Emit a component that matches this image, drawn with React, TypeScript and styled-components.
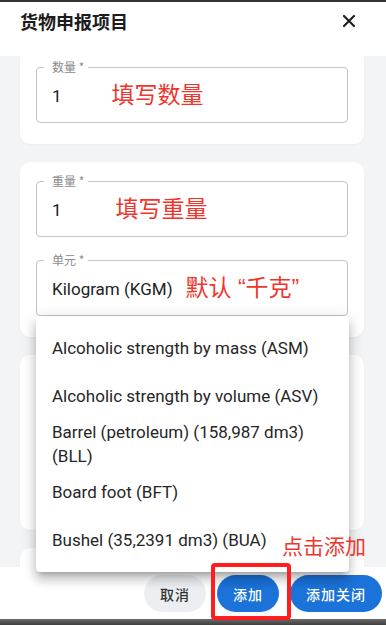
import React from 'react';
import styled, { createGlobalStyle } from 'styled-components';

const GlobalStyle = createGlobalStyle`
  html, body {
    margin: 0;
    padding: 0;
    background: #ffffff;
  }
  body {
    font-family: Roboto, "Noto Sans CJK SC", "Noto Sans", sans-serif;
    color: #222222;
  }
  * {
    box-sizing: border-box;
  }
`;

const units = [
  'Alcoholic strength by mass (ASM)',
  'Alcoholic strength by volume (ASV)',
  'Barrel (petroleum) (158,987 dm3) (BLL)',
  'Board foot (BFT)',
  'Bushel (35,2391 dm3) (BUA)',
];

/** 货物申报项目 弹窗 */
const App: React.FC = () => {
  return (
    <Screen>
      <GlobalStyle />
      <TopEdge />
      <Header>
        <Title>货物申报项目</Title>
        <CloseButton aria-label="关闭">
          <svg width="14" height="14" viewBox="0 0 14 14">
            <path
              d="M2 2 L12 12 M12 2 L2 12"
              stroke="#1f1f1f"
              strokeWidth="2.2"
              strokeLinecap="round"
            />
          </svg>
        </CloseButton>
      </Header>

      <Body>
        <Card $first>
          <Field>
            <Legend>数量 *</Legend>
            <ValueRow>
              <Value>1</Value>
              <Note $gap={50}>填写数量</Note>
            </ValueRow>
          </Field>
        </Card>

        <Card>
          <Field>
            <Legend>重量 *</Legend>
            <ValueRow>
              <Value>1</Value>
              <Note $gap={54}>填写重量</Note>
            </ValueRow>
          </Field>
          <SelectWrap>
            <Field>
              <Legend>单元 *</Legend>
              <ValueRow>
                <Value>Kilogram (KGM)</Value>
                <Note $gap={13}>默认 “千克”</Note>
              </ValueRow>
            </Field>
            <Menu>
              {units.map((u) => (
                <MenuItem key={u}>{u}</MenuItem>
              ))}
            </Menu>
          </SelectWrap>
        </Card>

        <Card $minHeight={175} />
        <Card $minHeight={175} />
      </Body>

      <Footer>
        <PillButton $variant="plain">取消</PillButton>
        <Highlighted>
          <PillButton>添加</PillButton>
          <Frame />
          <Callout>点击添加</Callout>
        </Highlighted>
        <PillButton>添加关闭</PillButton>
      </Footer>
      <BottomEdge />
    </Screen>
  );
};

// styles
const Screen = styled.div`
  position: relative;
  width: 386px;
  height: 625px;
  overflow: hidden;
  display: flex;
  flex-direction: column;
  background: #ffffff;
`;

const TopEdge = styled.div`
  height: 2px;
  flex: none;
  background: #343434;
`;

const BottomEdge = styled.div`
  height: 6px;
  flex: none;
  background: linear-gradient(#6a6a6a, #3e3e3e);
`;

const Header = styled.header`
  position: relative;
  flex: none;
  height: 54px;
  padding: 6px 30px 0 20px;
  display: flex;
  align-items: flex-start;
  justify-content: space-between;
  background: #ffffff;
`;

const Title = styled.h1`
  margin: 0;
  font-family: "Noto Sans CJK SC", "Noto Sans", sans-serif;
  font-size: 18px;
  line-height: 26px;
  font-weight: 700;
  color: #1c1c1c;
`;

const CloseButton = styled.button`
  margin-top: 6px;
  width: 14px;
  height: 14px;
  padding: 0;
  border: none;
  background: none;
  display: flex;
`;

const Body = styled.main`
  flex: 1;
  min-height: 0;
  padding: 0 22px 0 20px;
  display: flex;
  flex-direction: column;
  gap: 18px;
  background: #f3f4f6;
`;

const Card = styled.section<{ $first?: boolean; $minHeight?: number }>`
  flex: none;
  margin-top: ${(p) => (p.$first ? '-8px' : '0')};
  min-height: ${(p) => (p.$minHeight ? `${p.$minHeight}px` : 'auto')};
  padding: 13px 16px 21px;
  display: flex;
  flex-direction: column;
  gap: 17px;
  background: #ffffff;
  border-radius: 10px;
  box-shadow: 0 1px 3px rgba(0, 0, 0, 0.04);
`;

const Field = styled.fieldset`
  margin: 0;
  min-width: 0;
  padding: 0 15px;
  border: 1px solid #c4c4c4;
  border-radius: 4px;
`;

const Legend = styled.legend`
  margin-left: -8px;
  padding: 0 4px 0 8px;
  font-family: "Noto Sans CJK SC", "Noto Sans", sans-serif;
  font-size: 12px;
  line-height: 12px;
  color: #8c8c8c;
`;

const ValueRow = styled.div`
  height: 45px;
  margin-bottom: 4px;
  display: flex;
  align-items: center;
`;

const Value = styled.span`
  font-family: Roboto, "Noto Sans CJK SC", sans-serif;
  font-size: 17px;
  color: #222222;
`;

const Note = styled.span<{ $gap: number; $size?: number }>`
  margin-left: ${(p) => p.$gap}px;
  white-space: pre;
  font-family: "Liberation Sans", "Noto Sans CJK SC", sans-serif;
  font-size: ${(p) => p.$size ?? 23}px;
  line-height: 1;
  color: #f0352c;
`;

const SelectWrap = styled.div`
  position: relative;
`;

const Menu = styled.ul`
  position: absolute;
  z-index: 3;
  top: 100%;
  left: 0;
  right: -1px;
  margin: 0;
  padding: 8px 0;
  list-style: none;
  background: #ffffff;
  border-radius: 4px;
  box-shadow: 0 5px 5px -3px rgba(0, 0, 0, 0.2), 0 8px 10px 1px rgba(0, 0, 0, 0.14),
    0 3px 14px 2px rgba(0, 0, 0, 0.12);
`;

const MenuItem = styled.li`
  min-height: 48px;
  padding: 0 16px;
  display: flex;
  align-items: center;
  font-family: Roboto, sans-serif;
  font-size: 17px;
  line-height: 24px;
  color: #262626;
`;

const Footer = styled.footer`
  position: relative;
  flex: none;
  height: 52px;
  padding: 8px 4px 0 0;
  display: flex;
  align-items: flex-start;
  justify-content: flex-end;
  gap: 11px;
  background: #ffffff;
`;

const PillButton = styled.button<{ $variant?: 'plain' | 'primary' }>`
  height: 37px;
  padding: 0 16px;
  border: none;
  border-radius: 19px;
  font-family: "Noto Sans CJK SC", "Noto Sans", sans-serif;
  font-size: 14px;
  font-weight: 500;
  letter-spacing: 1px;
  color: ${(p) => (p.$variant === 'plain' ? '#333333' : '#ffffff')};
  background: ${(p) => (p.$variant === 'plain' ? '#eceef1' : '#1b72d8')};
`;

const Highlighted = styled.div`
  position: relative;
  display: flex;
`;

const Frame = styled.div`
  position: absolute;
  z-index: 4;
  left: -6px;
  right: -12px;
  top: -12px;
  bottom: -8px;
  border: 4px solid #ff1d1d;
  border-radius: 4px;
  pointer-events: none;
`;

const Callout = styled.span`
  position: absolute;
  z-index: 4;
  left: 65px;
  bottom: calc(100% + 18px);
  white-space: nowrap;
  font-family: "Noto Sans CJK SC", sans-serif;
  font-size: 21px;
  line-height: 24px;
  color: #f0352c;
`;

export default App;
